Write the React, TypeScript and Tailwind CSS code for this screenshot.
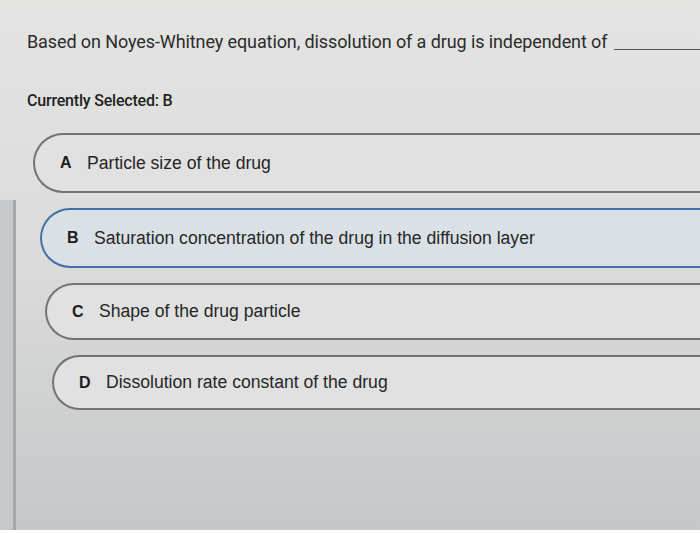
import React from 'react';

interface Option {
  letter: string;
  text: string;
  indent: string;
  height: string;
  selected?: boolean;
}

const options: Option[] = [
  { letter: 'A', text: 'Particle size of the drug', indent: 'ml-[6px]', height: 'h-[60px]' },
  { letter: 'B', text: 'Saturation concentration of the drug in the diffusion layer', indent: 'ml-[13px]', height: 'h-[60px]', selected: true },
  { letter: 'C', text: 'Shape of the drug particle', indent: 'ml-[18px]', height: 'h-[57px]' },
  { letter: 'D', text: 'Dissolution rate constant of the drug', indent: 'ml-[25px]', height: 'h-[55px]' },
];

function OptionRow({ letter, text, indent, height, selected }: Option) {
  return (
    <div
      className={`${indent} ${height} flex items-center pl-[25px] rounded-l-full border-2 border-r-0 ${
        selected ? 'border-[#4470a6] bg-[#d9e1e7]' : 'border-[#737373] bg-[#e0e1e0]'
      }`}
    >
      <span className="w-[27px] shrink-0 font-['Liberation_Sans',Arial,sans-serif] font-bold text-[16px] text-[#1d1d1d]">
        {letter}
      </span>
      <span className="font-['Liberation_Sans',Arial,sans-serif] text-[17.6px] text-[#262626] whitespace-nowrap">
        {text}
      </span>
    </div>
  );
}

export default function App() {
  return (
    <div className="h-[533px] w-[700px] overflow-hidden flex flex-col bg-gradient-to-b from-[#e4e5e3] via-[#dadbda] to-[#c5c6c8]">
      <div className="flex-1 flex min-h-0">
        <div className="w-[16px] shrink-0 flex flex-col">
          <div className="h-[200px]" />
          <div className="flex-1 bg-[#c6c9cb] border-r-[3px] border-[#a3a7aa]" />
        </div>

        <div className="flex-1 min-w-0 pl-[11px]">
          <div className="pt-[29px] flex items-end font-['Roboto',sans-serif] text-[18px] leading-[26px] text-[#2b2b2b]">
            <span className="whitespace-nowrap tracking-[-0.1px]">
              Based on Noyes-Whitney equation, dissolution of a drug is independent of
            </span>
            <span className="flex-1 ml-[7px] mb-[5px] border-b border-[#555]" />
          </div>

          <div className="mt-[35px] font-['Roboto',sans-serif] font-medium text-[16px] leading-[22px] text-[#1f1f1f] tracking-[-0.2px]">
            Currently Selected: B
          </div>

          <div className="mt-[21px] flex flex-col gap-[15px]">
            {options.map((o) => (
              <OptionRow key={o.letter} {...o} />
            ))}
          </div>
        </div>
      </div>
      <div className="h-[3px] bg-white" />
    </div>
  );
}
